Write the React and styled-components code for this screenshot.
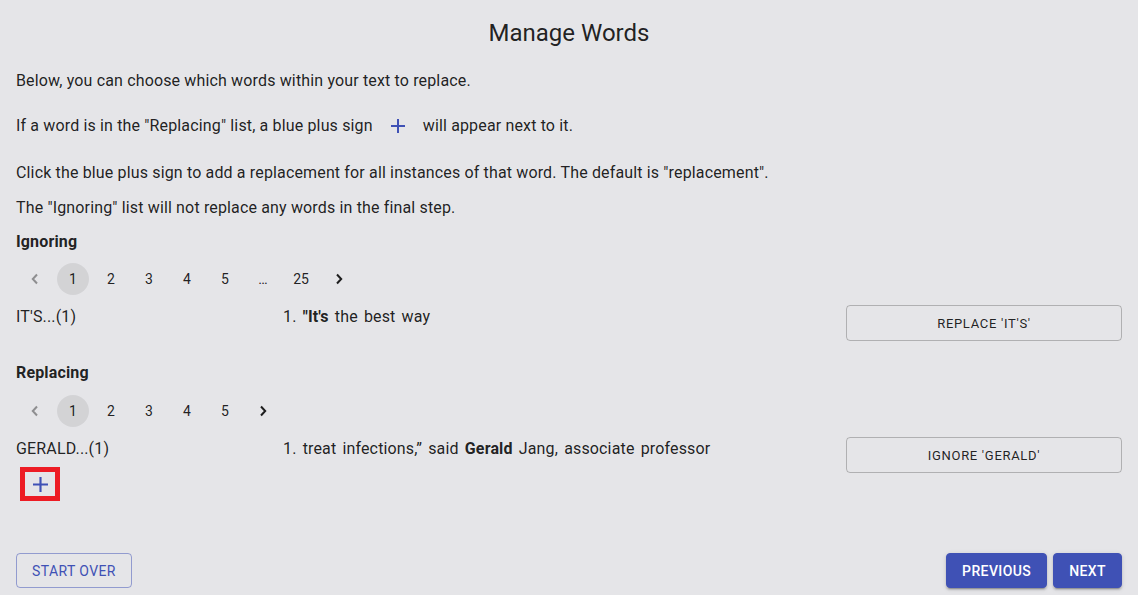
import React from 'react';
import styled, { createGlobalStyle } from 'styled-components';

const GlobalStyle = createGlobalStyle`
  html, body {
    margin: 0;
    padding: 0;
    background: #e5e5e8;
  }
  body {
    font-family: Roboto, "Liberation Sans", sans-serif;
    color: rgba(0, 0, 0, 0.87);
  }
`;

const blue = '#3f51b5';

const Page = styled.div`
  width: 1138px;
  height: 595px;
  box-sizing: border-box;
  padding: 0 16px;
  display: flex;
  flex-direction: column;
  overflow: hidden;
`;

const Title = styled.h1`
  margin: 17px 0 20px;
  font-size: 24px;
  font-weight: 400;
  line-height: 32px;
  text-align: center;
`;

const Text = styled.p`
  margin: 0 0 ${p => p.gap || 0}px;
  font-size: 16px;
  letter-spacing: 0.15px;
  line-height: 24px;
  display: flex;
  align-items: center;
`;

const PlusIcon = ({ size = 14 }) => (
  <svg width={size} height={size} viewBox="0 0 14 14">
    <path d="M7 0v14M0 7h14" stroke={blue} strokeWidth="2" fill="none" />
  </svg>
);

const InlinePlus = styled.span`
  display: inline-flex;
  align-items: center;
  margin: 0 18px;
`;

const Heading = styled.h3`
  margin: 0 0 ${p => p.gap || 0}px;
  font-size: 16px;
  letter-spacing: 0.15px;
  font-weight: 700;
  line-height: 24px;
`;

const Pager = styled.nav`
  display: flex;
  align-items: center;
  height: 32px;
  margin-bottom: 11px;
`;

const PageItem = styled.span`
  width: 32px;
  height: 32px;
  margin: 0 3px;
  border-radius: 16px;
  display: flex;
  align-items: center;
  justify-content: center;
  font-size: 14px;
  color: rgba(0, 0, 0, 0.87);
  background: ${p => (p.selected ? 'rgba(0, 0, 0, 0.08)' : 'transparent')};
`;

const Chevron = ({ dir, disabled }) => (
  <svg width="10" height="12" viewBox="0 0 10 12">
    <path
      d={dir === 'left' ? 'M7 1.5L2.8 6 7 10.5' : 'M3 1.5L7.2 6 3 10.5'}
      stroke={disabled ? 'rgba(0,0,0,0.38)' : 'rgba(0,0,0,0.87)'}
      strokeWidth="2"
      fill="none"
    />
  </svg>
);

const Pagination = ({ pages }) => (
  <Pager>
    <PageItem><Chevron dir="left" disabled /></PageItem>
    {pages.map((p, i) => (
      <PageItem key={i} selected={p === '1'}>{p}</PageItem>
    ))}
    <PageItem><Chevron dir="right" /></PageItem>
  </Pager>
);

const WordRow = styled.div`
  display: grid;
  grid-template-columns: 267px 1fr 276px;
  align-items: start;
  margin-bottom: ${p => p.gap || 0}px;
`;

const WordCell = styled.div`
  font-size: 16px;
  letter-spacing: 0.15px;
  line-height: 22px;
`;

const Sentence = styled.div`
  font-size: 16px;
  line-height: 22px;
  letter-spacing: 0.15px;
  word-spacing: 2px;
  b { font-weight: 700; }
`;

const OutlineButton = styled.button`
  height: 36px;
  margin: -1px 0 0;
  border: 1px solid rgba(0, 0, 0, 0.23);
  border-radius: 4px;
  background: transparent;
  font-family: Roboto, "Liberation Sans", sans-serif;
  font-size: 13px;
  font-weight: 400;
  letter-spacing: 0.7px;
  color: rgba(0, 0, 0, 0.87);
  text-transform: uppercase;
`;

const AddBox = styled.span`
  display: flex;
  align-items: center;
  justify-content: center;
  width: 40px;
  height: 34px;
  box-sizing: border-box;
  margin: 7px 0 0 4px;
  border: 5px solid #ed1c24;
`;

const Footer = styled.div`
  display: flex;
  align-items: center;
  margin-top: auto;
  margin-bottom: 7px;
`;

const FootButton = styled.button`
  height: 35px;
  padding: 0 15px;
  border-radius: 4px;
  font-family: Roboto, "Liberation Sans", sans-serif;
  font-size: 14px;
  font-weight: ${p => (p.primary ? 500 : 400)};
  letter-spacing: 0.02857em;
  text-transform: uppercase;
  border: 1px solid ${p => (p.primary ? blue : 'rgba(63, 81, 181, 0.5)')};
  background: ${p => (p.primary ? blue : 'transparent')};
  color: ${p => (p.primary ? '#fff' : blue)};
  box-shadow: ${p => (p.primary ? '0 3px 1px -2px rgba(0,0,0,.2), 0 2px 2px 0 rgba(0,0,0,.14), 0 1px 5px 0 rgba(0,0,0,.12)' : 'none')};
  margin-left: ${p => p.space || 0}px;
`;

const Spacer = styled.div`
  flex: 1;
`;

export default function App() {
  return (
    <>
      <GlobalStyle />
      <Page>
        <Title>Manage Words</Title>
        <Text gap={21}>Below, you can choose which words within your text to replace.</Text>
        <Text gap={23}>
          If a word is in the "Replacing" list, a blue plus sign
          <InlinePlus><PlusIcon /></InlinePlus>
          will appear next to it.
        </Text>
        <Text gap={11}>
          Click the blue plus sign to add a replacement for all instances of that word. The default is "replacement".
        </Text>
        <Text gap={10}>The "Ignoring" list will not replace any words in the final step.</Text>

        <Heading gap={9}>Ignoring</Heading>
        <Pagination pages={['1', '2', '3', '4', '5', '…', '25']} />
        <WordRow gap={20}>
          <WordCell>IT'S...(1)</WordCell>
          <Sentence>1. <b>"It's</b> the best way</Sentence>
          <OutlineButton>Replace 'it's'</OutlineButton>
        </WordRow>

        <Heading gap={10}>Replacing</Heading>
        <Pagination pages={['1', '2', '3', '4', '5']} />
        <WordRow>
          <WordCell>
            GERALD...(1)
            <AddBox><PlusIcon size={15} /></AddBox>
          </WordCell>
          <Sentence>1. treat infections,” said <b>Gerald</b> Jang, associate professor</Sentence>
          <OutlineButton>Ignore 'gerald'</OutlineButton>
        </WordRow>

        <Footer>
          <FootButton>Start over</FootButton>
          <Spacer />
          <FootButton primary>Previous</FootButton>
          <FootButton primary space={6}>Next</FootButton>
        </Footer>
      </Page>
    </>
  );
}
